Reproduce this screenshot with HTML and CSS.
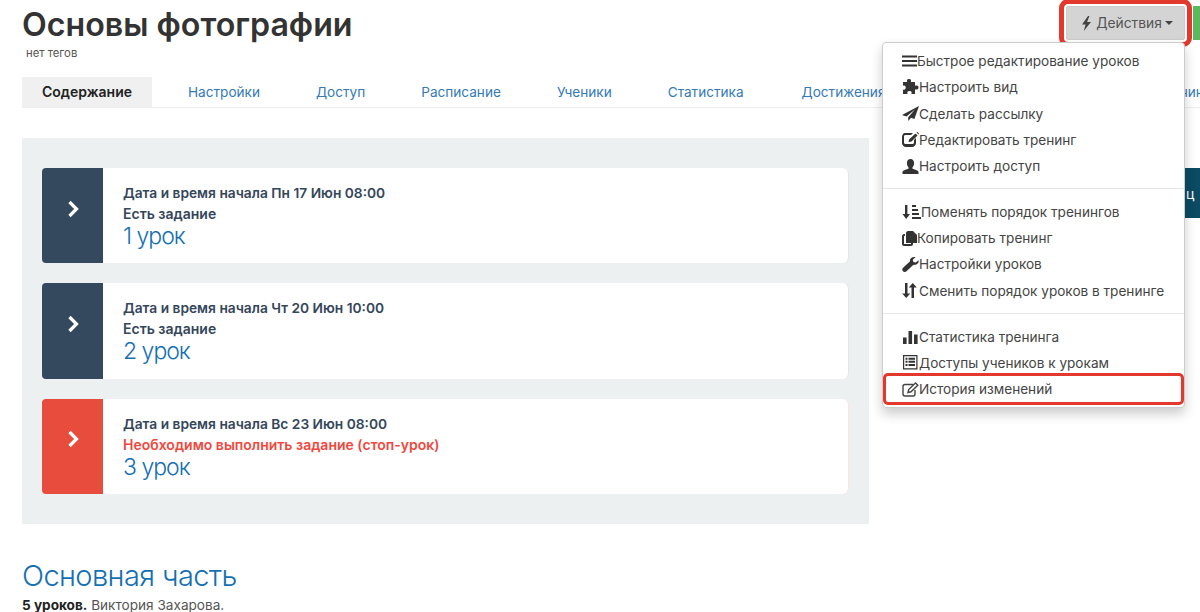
FILE: index.html
```html
<!DOCTYPE html>
<html lang="ru">
<head>
    <meta charset="UTF-8">
    <meta name="viewport" content="width=device-width, initial-scale=1.0">
    <title>Основы фотографии</title>
    <link rel="stylesheet" href="styles.css">
</head>
<body>

    <div class="page">
        <!-- Header -->
        <div class="top-row">
            <div class="title-block">
                <h1>Основы фотографии</h1>
                <div class="tags">нет тегов</div>
            </div>
            <div class="actions">
                <button class="actions-btn">
                    <svg class="bolt" width="11" height="15" viewBox="0 0 11 15"><path d="M7 0 1 8.4h3.6L2.8 15 10 5.9H6.1L8.4 0z"/></svg>
                    Действия
                    <span class="caret"></span>
                </button>

                <ul class="menu">
                    <li><svg width="15" height="14" viewBox="0 0 15 14"><path d="M0 1.5h15v2H0zM0 6h15v2H0zM0 10.500h15v2H0z"/></svg>Быстрое редактирование уроков</li>
                    <li><svg width="17" height="16" viewBox="0 0 17 16"><path d="M7 0c2 0 2.500 1.300 1.800 3h4.200v3.800c1.700-.7 3.500-.3 3.500 1.700s-1.800 2.400-3.500 1.700V15H9.400c.7-1.700.2-3-1.900-3s-2.600 1.300-1.900 3H1v-4.500c1.600.7 2.700 0 2.700-1.900S2.600 6 1 6.700V3h4.200C4.500 1.300 5 0 7 0z"/></svg>Настроить вид</li>
                    <li><svg width="17" height="15" viewBox="0 0 17 15"><path d="M17 0 0 9l4.400 1.400L13 3.500 6.200 11.200V15l2.800-3.300 3.400 1.300z"/></svg>Сделать рассылку</li>
                    <li><svg width="17" height="15" viewBox="0 0 17 15"><path d="M3 1h8L9 3H3.500C2.700 3 2 3.700 2 4.500v6c0 .8.700 1.500 1.500 1.500h7c.8 0 1.500-.7 1.500-1.500V8l2-2v5c0 2.200-1.800 4-4 4H4c-2.200 0-4-1.800-4-4V5c0-2.200 1.300-4 3-4zM13.500 1.500 15.500 3.500 9.500 9.500 6.500 10 7 7.500zM14.500 .5l1 -.5 1.500 1.500-.5 1z"/></svg>Редактировать тренинг</li>
                    <li><svg width="17" height="15" viewBox="0 0 17 15"><path d="M8.500 0c2.400 0 3.600 1.800 3.600 4.200 0 1.700-.7 3.200-1.600 4.100v1.400c2.800.8 6 1.800 6 3.300V15H.500v-2c0-1.500 3.200-2.500 6-3.300V8.300C5.600 7.400 4.900 5.900 4.900 4.200 4.900 1.800 6.100 0 8.500 0z"/></svg>Настроить доступ</li>
                    <li class="sep"></li>
                    <li><svg width="19" height="15" viewBox="0 0 19 15"><path d="M3 1h2.400v9H8l-3.800 5L.5 10H3zM10 1h4v2h-4zM10 5h6v2h-6zM10 9h7v2h-7zM10 13h9v2h-9z"/></svg>Поменять порядок тренингов</li>
                    <li><svg width="15" height="15" viewBox="0 0 15 15"><path d="M6 0h5l4 4v8H4V2c0-1 1-2 2-2zM0 5c0-1 1-2 2-2h1v2H2v8h7v-1h2v1c0 1-1 2-2 2H2c-1 0-2-1-2-2z"/></svg>Копировать тренинг</li>
                    <li><svg width="17" height="15" viewBox="0 0 17 15"><path d="M16.600 3.200c.6 2.300-1.500 5-4.300 4.500-.6-.1-1 .1-1.400.5L4.500 14.200c-1 1-2.600 1-3.500.1-1-1-1-2.500.1-3.500l6.500-6c.4-.4.500-.8.400-1.300C7.500 1.500 10.600-.5 13.400.2l-2.600 2.500.6 2.300 2.300.6z"/></svg>Настройки уроков</li>
                    <li><svg width="17" height="15" viewBox="0 0 17 15"><path d="M3 0h2.500v10.500H8.300L4.200 15 .2 10.500H3zM12 15h-2.500V4.500H6.700L10.800 0l4 4.500H12z"/></svg>Сменить порядок уроков в тренинге</li>
                    <li class="sep"></li>
                    <li><svg width="17" height="14" viewBox="0 0 17 14"><path d="M1 7.500h3.600V14H1zM6.500 1h3.600v13H6.500zM12 4.500h3.600V14H12z"/></svg>Статистика тренинга</li>
                    <li><svg width="17" height="15" viewBox="0 0 17 15"><path fill-rule="evenodd" d="M1 0h14.500v14.500H1zM2.200 1.200v12.100h12.100V1.200zM3.500 2.700h2v2h-2zM6.500 2.700h6.500v2H6.500zM3.500 5.800h2v2h-2zM6.500 5.800h6.500v2H6.500zM3.500 8.900h2v2h-2zM6.500 8.900h6.500v2H6.500z"/></svg>Доступы учеников к урокам</li>
                    <li class="marked"><svg class="outline" width="17" height="15" viewBox="0 0 17 15"><path d="M11 2.500H3c-1.100 0-2 .9-2 2V12c0 1.100.9 2 2 2h8c1.100 0 2-.9 2-2V8"/><path d="M6 10.500 6.700 7.500 13.500 1 15.800 3.200 9 9.800z"/></svg>История изменений</li>
                </ul>
            </div>
            <button class="green-btn"></button>
        </div>

        <!-- Tabs -->
        <ul class="tabs">
            <li class="active">Содержание</li>
            <li>Настройки</li>
            <li>Доступ</li>
            <li>Расписание</li>
            <li>Ученики</li>
            <li>Статистика</li>
            <li class="wide-tab">Достижения</li>
            <li class="last-tab">Тренинги</li>
        </ul>

        <!-- Lessons -->
        <div class="content-row">
            <div class="lesson-panel">
                <div class="lesson">
                    <div class="lesson-arrow">
                        <svg width="12" height="18" viewBox="0 0 12 18"><path d="M2.500 2 9.500 9l-7 7"/></svg>
                    </div>
                    <div class="lesson-body">
                        <div class="lesson-date">Дата и время начала Пн 17 Июн 08:00</div>
                        <div class="lesson-note">Есть задание</div>
                        <a class="lesson-name">1 урок</a>
                    </div>
                </div>
                <div class="lesson">
                    <div class="lesson-arrow">
                        <svg width="12" height="18" viewBox="0 0 12 18"><path d="M2.500 2 9.500 9l-7 7"/></svg>
                    </div>
                    <div class="lesson-body">
                        <div class="lesson-date">Дата и время начала Чт 20 Июн 10:00</div>
                        <div class="lesson-note">Есть задание</div>
                        <a class="lesson-name">2 урок</a>
                    </div>
                </div>
                <div class="lesson stop">
                    <div class="lesson-arrow">
                        <svg width="12" height="18" viewBox="0 0 12 18"><path d="M2.500 2 9.500 9l-7 7"/></svg>
                    </div>
                    <div class="lesson-body">
                        <div class="lesson-date">Дата и время начала Вс 23 Июн 08:00</div>
                        <div class="lesson-note">Необходимо выполнить задание (стоп-урок)</div>
                        <a class="lesson-name">3 урок</a>
                    </div>
                </div>
            </div>
            <button class="teal-btn">ц</button>
        </div>

        <!-- Section -->
        <h2 class="section-title">Основная часть</h2>
        <div class="section-info"><b>5 уроков.</b> Виктория Захарова.</div>
    </div>

</body>
</html>
```

FILE: styles.css
```css
/* General Styles */
html, body {
    height: 612px;
    overflow: hidden;
}

body {
    font-family: 'Inter', 'Noto Sans', sans-serif;
    font-size: 13.6px;
    color: #333;
    background: #fff;
    margin: 0;
}

.page {
    width: 1300px;
    padding-left: 22px;
    box-sizing: border-box;
}

ul {
    list-style: none;
    margin: 0;
    padding: 0;
}

/* Header */
.top-row {
    display: flex;
    width: 1271px;
    height: 77px;
    box-sizing: border-box;
    padding-top: 6px;
}

.title-block {
    flex: 1;
}

h1 {
    font-size: 32.2px;
    line-height: 38px;
    font-weight: 600;
    color: #333;
    margin: 0;
}

.tags {
    font-size: 11.3px;
    line-height: 14px;
    color: #555;
    margin: 2px 0 0 4px;
}

/* Actions dropdown */
.actions {
    position: relative;
    flex: none;
    width: 119px;
}

.actions-btn {
    display: flex;
    align-items: center;
    justify-content: center;
    width: 119px;
    height: 34px;
    font: 13.8px 'Inter', sans-serif;
    color: #555;
    background: #d4d4d4;
    border: 1px solid #ccc;
    border-radius: 2px;
    outline: 5px solid #e3382c;
    outline-offset: 2px;
    padding: 0 0 0 3px;
}

.bolt {
    fill: #444;
    margin-right: 4px;
}

.caret {
    border-top: 4px solid #444;
    border-left: 4px solid transparent;
    border-right: 4px solid transparent;
    margin-left: 3px;
}

.menu {
    position: absolute;
    top: 36px;
    right: 0;
    z-index: 10;
    width: 303px;
    box-sizing: border-box;
    padding: 5px 0;
    background: #fff;
    border: 1px solid #ccc;
    border-radius: 4px;
    box-shadow: 0 6px 12px rgba(0, 0, 0, 0.2);
}

.menu li {
    position: relative;
    display: flex;
    align-items: center;
    height: 26.25px;
    padding-left: 19px;
    color: #444;
    white-space: nowrap;
}

.menu svg {
    fill: #333;
    flex: none;
}

.menu svg.outline {
    fill: none;
    stroke: #444;
    stroke-width: 1.4;
}

.menu .sep {
    height: 1px;
    padding: 0;
    margin: 9px 0 9.6px;
    background: #e7e7e7;
}

.menu .marked::after {
    content: "";
    position: absolute;
    top: -3px;
    bottom: -3px;
    left: 0;
    right: 0;
    border: 3.5px solid #e3382c;
    border-radius: 5px;
}

.green-btn {
    width: 100px;
    height: 34px;
    margin-left: 8px;
    background: #5cb85c;
    border: none;
    flex: none;
}

/* Tabs */
.tabs {
    display: flex;
    height: 30px;
    border-bottom: 1px solid #eee;
    white-space: nowrap;
}

.tabs li {
    padding: 0 20px 0 36px;
    line-height: 30px;
    color: #337ab7;
}

.tabs li.active {
    padding: 0 20px;
    font-size: 14px;
    font-weight: 600;
    color: #222;
    background: #f0f0f0;
}

.tabs .wide-tab {
    padding-left: 38px;
}

.tabs .last-tab {
    margin-left: 214px;
}

/* Lessons */
.content-row {
    display: flex;
    margin-top: 30px;
}

.lesson-panel {
    flex: none;
    width: 847px;
    box-sizing: border-box;
    padding: 30px 20px;
    background: #ecf0f1;
}

.lesson {
    display: flex;
    height: 95.3px;
    margin-bottom: 20px;
    background: #fff;
    border-right: 1px solid #e3e6e9;
    border-radius: 6px;
}

.lesson:last-child {
    margin-bottom: 0;
}

.lesson-arrow {
    display: flex;
    align-items: center;
    justify-content: center;
    flex: none;
    width: 61px;
    padding-bottom: 14px;
    box-sizing: border-box;
    background: #34495e;
    border-radius: 4px 0 0 4px;
}

.lesson-arrow svg {
    fill: none;
    stroke: #fff;
    stroke-width: 3.2;
}

.lesson-body {
    padding: 15px 20px 0;
}

.lesson-date, .lesson-note {
    font-size: 13.75px;
    line-height: 21px;
    font-weight: 600;
    color: #34465a;
}

.lesson-note {
    font-size: 14px;
    line-height: 20px;
}

.lesson-name {
    display: block;
    margin-top: 1px;
    font-size: 23px;
    line-height: 23px;
    font-weight: 300;
    letter-spacing: -1px;
    color: #146fb3;
}

.stop {
    border-right-color: #fbe3e0;
}

.stop .lesson-arrow {
    background: #e74c3c;
}

.stop .lesson-note {
    color: #f0483e;
}

.teal-btn {
    flex: none;
    width: 200px;
    height: 50px;
    margin: 30px 0 0 316px;
    padding: 0 0 0 1px;
    font: 14px 'Inter', sans-serif;
    text-align: left;
    color: #fff;
    background: #0b4b63;
    border: none;
}

/* Section */
.section-title {
    font-size: 29px;
    line-height: 36px;
    font-weight: 300;
    letter-spacing: -0.6px;
    color: #146fb3;
    margin: 34px 0 0;
}

.section-info {
    margin-top: 4px;
    line-height: 14px;
    color: #555;
}

.section-info b {
    font-weight: 700;
    color: #222;
}
```
